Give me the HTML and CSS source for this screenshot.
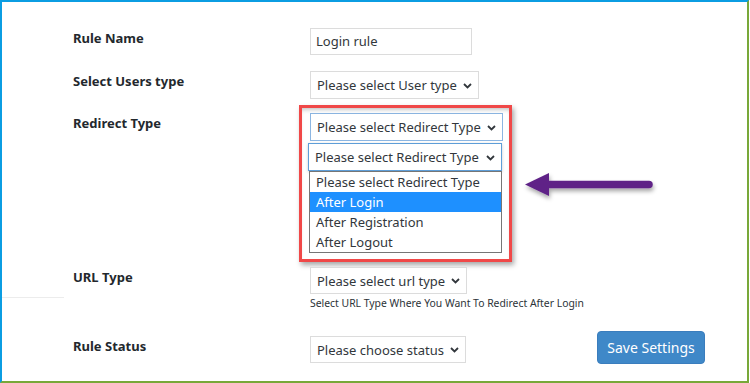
FILE: index.html
```html
<!DOCTYPE html>
<html>
<head>
    <meta charset="UTF-8">
    <title>Redirect Rule</title>
    <link rel="stylesheet" href="styles.css">
</head>
<body>
    <div class="frame">
        <form class="ruleForm" onsubmit="return false;">
            <div class="row rowName">
                <label class="label">Rule Name</label>
                <div class="field">
                    <div class="textInput">Login rule</div>
                </div>
            </div>

            <div class="row rowUsers">
                <label class="label">Select Users type</label>
                <div class="field">
                    <div class="select selUsers">
                        <span>Please select User type</span>
                        <svg class="chev" width="9" height="6" viewBox="0 0 9 6"><path d="M1 1 L4.5 4.5 L8 1" fill="none" stroke="#32373c" stroke-width="1.8"/></svg>
                    </div>
                </div>
            </div>

            <div class="row rowRedirect">
                <label class="label">Redirect Type</label>
                <div class="field">
                    <div class="select selRedirect focused">
                        <span>Please select Redirect Type</span>
                        <svg class="chev" width="9" height="6" viewBox="0 0 9 6"><path d="M1 1 L4.5 4.5 L8 1" fill="none" stroke="#32373c" stroke-width="1.8"/></svg>
                    </div>

                    <!-- opened dropdown, highlighted -->
                    <div class="highlight"></div>
                    <div class="select selRedirect openSel">
                        <span>Please select Redirect Type</span>
                        <svg class="chev" width="9" height="6" viewBox="0 0 9 6"><path d="M1 1 L4.5 4.5 L8 1" fill="none" stroke="#32373c" stroke-width="1.8"/></svg>
                    </div>
                    <ul class="optionList">
                        <li>Please select Redirect Type</li>
                        <li class="active">After Login</li>
                        <li>After Registration</li>
                        <li>After Logout</li>
                    </ul>
                </div>
                <svg class="pointer" width="140" height="40" viewBox="0 0 140 40">
                    <defs>
                        <filter id="shade" x="-10%" y="-30%" width="130%" height="180%">
                            <feDropShadow dx="1" dy="3" stdDeviation="2" flood-color="#000" flood-opacity="0.35"/>
                        </filter>
                    </defs>
                    <g filter="url(#shade)" fill="#5f2487">
                        <polygon points="3,18.5 27,7 27,30"/>
                        <line x1="25" y1="18.5" x2="127" y2="18.5" stroke="#5f2487" stroke-width="7.5" stroke-linecap="round"/>
                    </g>
                </svg>
            </div>

            <div class="row rowUrl">
                <label class="label">URL Type</label>
                <div class="field">
                    <div class="select selUrl">
                        <span>Please select url type</span>
                        <svg class="chev" width="9" height="6" viewBox="0 0 9 6"><path d="M1 1 L4.5 4.5 L8 1" fill="none" stroke="#32373c" stroke-width="1.8"/></svg>
                    </div>
                    <p class="help">Select URL Type Where You Want To Redirect After Login</p>
                </div>
            </div>

            <div class="row rowStatus">
                <label class="label">Rule Status</label>
                <div class="field fieldStatus">
                    <div class="select selStatus">
                        <span>Please choose status</span>
                        <svg class="chev" width="9" height="6" viewBox="0 0 9 6"><path d="M1 1 L4.5 4.5 L8 1" fill="none" stroke="#32373c" stroke-width="1.8"/></svg>
                    </div>
                    <button class="saveBtn">Save Settings</button>
                </div>
            </div>
        </form>
    </div>
</body>
</html>
```

FILE: styles.css
```css
body {
    margin: 0;
    background: #fff;
    font-family: "Noto Sans", "Open Sans", sans-serif;
    color: #23282d;
}

.frame {
    position: relative;
    width: 749px;
    height: 383px;
    box-sizing: border-box;
    border-top: 2px solid #0b9de2;
    border-left: 2px solid #0b9de2;
    border-right: 2px solid #78a839;
    border-bottom: 2px solid #78a839;
    padding-top: 26px;
    overflow: hidden;
}

.row {
    position: relative;
    display: grid;
    grid-template-columns: 237px 1fr;
    padding-left: 71px;
}

.rowName { height: 43px; }
.rowUsers { height: 42px; }
.rowRedirect { height: 154px; }
.rowUrl { height: 69px; }

/* thin separator on the left edge */
.rowUrl::after {
    content: "";
    position: absolute;
    left: 0;
    top: 30px;
    width: 62px;
    border-top: 1px solid #ececec;
}

.label {
    font-size: 13px;
    font-weight: bold;
    line-height: 20px;
}

.field {
    position: relative;
}

.textInput {
    width: 162px;
    height: 27px;
    box-sizing: border-box;
    border: 1px solid #dcdcdc;
    padding: 0 5px;
    font-size: 13px;
    line-height: 25px;
    color: #32373c;
}

.select {
    display: flex;
    align-items: center;
    justify-content: space-between;
    height: 28px;
    box-sizing: border-box;
    border: 1px solid #dcdcdc;
    background: #fff;
    padding: 0 6px 0 6px;
    font-size: 13px;
    color: #32373c;
    white-space: nowrap;
}

.chev {
    flex: none;
    margin-top: 1px;
}

.selUsers { width: 169px; }
.selRedirect { width: 193px; }
.selUrl { width: 157px; height: 27px; }
.selStatus { width: 156px; height: 27px; }

.focused {
    border-color: #8cb6e2;
}

.help {
    margin: 2px 0 0;
    font-size: 10.4px;
    line-height: 15px;
    color: #2c3338;
}

/* annotation box round the opened dropdown */
.highlight {
    position: absolute;
    left: -11px;
    top: -8px;
    width: 213px;
    height: 157px;
    box-sizing: border-box;
    border: 3px solid #f04848;
    box-shadow: 2px 3px 5px rgba(0, 0, 0, 0.35), inset 0 4px 5px -3px rgba(0, 0, 0, 0.3);
}

.openSel {
    position: absolute;
    left: -2px;
    top: 30px;
    width: 194px;
    border-color: #5e9ed8;
    box-shadow: 0 1px 3px rgba(0, 0, 0, 0.2);
}

.optionList {
    position: absolute;
    left: -1px;
    top: 58px;
    width: 193px;
    box-sizing: border-box;
    margin: 0;
    padding: 0;
    list-style: none;
    background: #fff;
    border: 1px solid #767676;
    font-size: 13px;
    color: #32373c;
}

.optionList li {
    height: 20px;
    line-height: 20px;
    padding-left: 6px;
}

.optionList .active {
    background: #1e90ff;
    color: #fff;
}

.pointer {
    position: absolute;
    left: 520px;
    top: 53px;
}

.fieldStatus {
    display: flex;
    align-items: flex-start;
}

.saveBtn {
    margin: -5px 0 0 131px;
    width: 108px;
    height: 33px;
    border: 1px solid #3a7dbd;
    border-radius: 4px;
    background: #3f88c8;
    color: #fff;
    font-family: inherit;
    font-size: 14px;
    padding: 0;
}
```
